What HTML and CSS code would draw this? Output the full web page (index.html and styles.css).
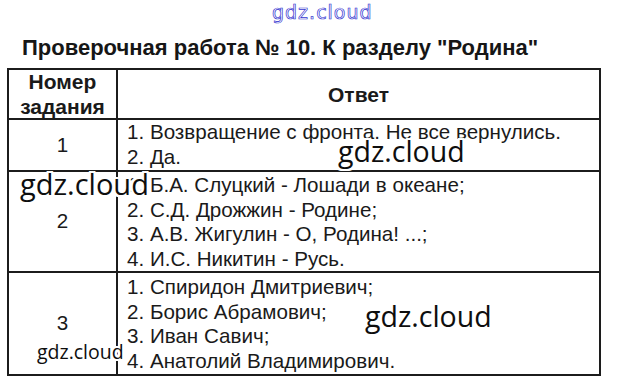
FILE: index.html
```html
<!DOCTYPE html>
<html lang="ru">
<head>
<meta charset="utf-8">
<title>Проверочная работа № 10</title>
<link rel="stylesheet" href="styles.css">
</head>
<body>
<div class="page">
  <div class="wm-top">gdz.cloud</div>
  <h1 class="title">Проверочная работа № 10. К разделу "Родина"</h1>
  <div class="grid">
    <div class="cell num head">Номер<br>задания</div>
    <div class="cell ans head center">Ответ</div>

    <div class="cell num row1">1</div>
    <div class="cell ans row1">1. Возвращение с фронта. Не все вернулись.<br>2. Да.</div>

    <div class="cell num row2">2</div>
    <div class="cell ans row2">1. Б.А. Слуцкий - Лошади в океане;<br>2. С.Д. Дрожжин - Родине;<br>3. А.В. Жигулин - О, Родина! ...;<br>4. И.С. Никитин - Русь.</div>

    <div class="cell num row3 last">3</div>
    <div class="cell ans row3 last">1. Спиридон Дмитриевич;<br>2. Борис Абрамович;<br>3. Иван Савич;<br>4. Анатолий Владимирович.</div>
  </div>
  <div class="wm wm1">gdz.cloud</div>
  <div class="wm wm2">gdz.cloud</div>
  <div class="wm wm3">gdz.cloud</div>
  <div class="wm wm4">gdz.cloud</div>
</div>
</body>
</html>
```
FILE: styles.css
```css
* { box-sizing: border-box; }
html, body { margin: 0; padding: 0; background: #fff; }
body { font-family: "Liberation Sans", Arial, sans-serif; color: #1a1a1a; }
.page { position: relative; width: 619px; height: 384px; overflow: hidden; }

.wm-top {
  height: 34px;
  padding-top: 3px;
  padding-left: 272px;
  font-family: "DejaVu Sans", sans-serif;
  font-size: 19px;
  line-height: 18px;
  letter-spacing: 1px;
  color: #fff;
  -webkit-text-stroke: 0.7px #3434d0;
}

.title {
  margin: 0 0 6px 22px;
  font-size: 22px;
  line-height: 28px;
  font-weight: bold;
  color: #161616;
}

.grid {
  margin-left: 7px;
  width: 594px;
  display: grid;
  grid-template-columns: 109px 1fr;
  border: 2px solid #1c1c1c;
}

.cell {
  font-size: 20.6px;
  line-height: 24.5px;
  border-bottom: 2px solid #1c1c1c;
}
.cell.last { border-bottom: none; }
.num {
  border-right: 2px solid #1c1c1c;
  display: flex;
  align-items: center;
  justify-content: center;
  text-align: center;
}
.ans { padding-left: 9px; }
.head { font-weight: bold; font-size: 21px; line-height: 25px; height: 50px; }
.head.center { display: flex; align-items: center; justify-content: center; padding-left: 0; }
.row1 { height: 52px; }
.row2 { height: 101px; }
.row2.ans { padding-top: 1px; }
.row3 { height: 101px; }
.row3.ans { padding-top: 2px; }

.wm {
  position: absolute;
  font-family: "Open Sans", sans-serif;
  font-weight: 500;
  color: #0e0e0e;
  line-height: 1;
  white-space: nowrap;
  text-shadow: 2px 0 0 #fff, -2px 0 0 #fff, 0 2px 0 #fff, 0 -2px 0 #fff, 2px 2px 0 #fff, -2px -2px 0 #fff, 2px -2px 0 #fff, -2px 2px 0 #fff;
}
.wm1 { left: 338px; top: 137px; font-size: 28.5px; }
.wm2 { left: 20px; top: 169px; font-size: 29px; }
.wm3 { left: 365px; top: 302px; font-size: 28.5px; }
.wm4 { left: 37px; top: 342px; font-size: 19.5px; }
```
